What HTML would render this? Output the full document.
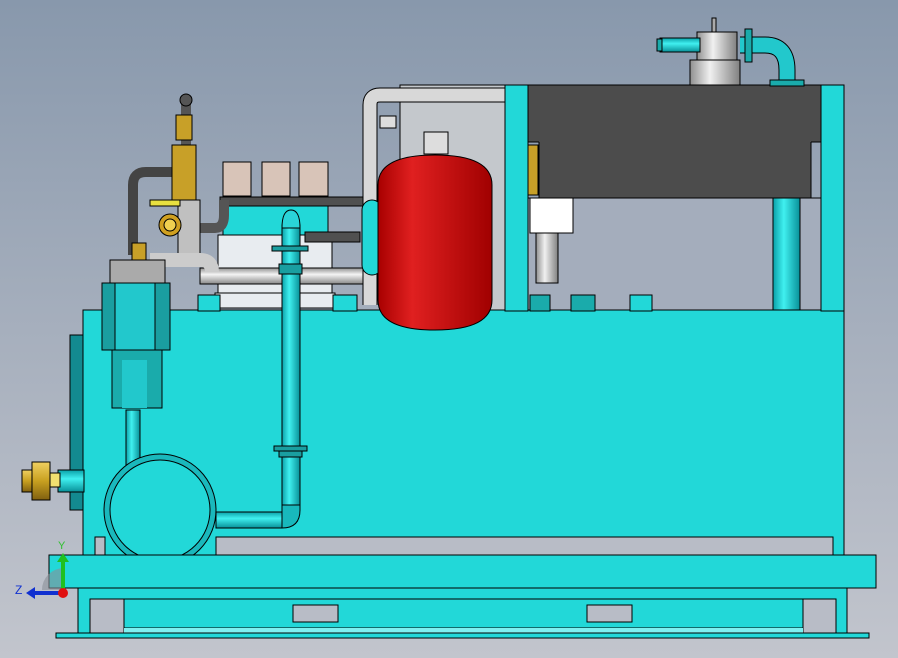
<!DOCTYPE html>
<html><head><meta charset="utf-8"><style>
html,body{margin:0;padding:0;width:898px;height:658px;overflow:hidden}
svg{display:block}
</style></head><body>
<svg width="898" height="658" viewBox="0 0 898 658" xmlns="http://www.w3.org/2000/svg">
<defs>
<linearGradient id="bg" x1="0" y1="0" x2="0" y2="1"><stop offset="0" stop-color="#8898ac"/><stop offset="0.5" stop-color="#a6afbd"/><stop offset="1" stop-color="#c2c5cd"/></linearGradient>
<linearGradient id="redh" x1="0" x2="1"><stop offset="0" stop-color="#a80000"/><stop offset="0.3" stop-color="#e02020"/><stop offset="1" stop-color="#a00000"/></linearGradient>
<linearGradient id="cyv" x1="0" x2="1"><stop offset="0" stop-color="#0aa0a8"/><stop offset="0.4" stop-color="#40f0f0"/><stop offset="1" stop-color="#089098"/></linearGradient>
<linearGradient id="cyh" x1="0" y1="0" x2="0" y2="1"><stop offset="0" stop-color="#0aa0a8"/><stop offset="0.4" stop-color="#40f0f0"/><stop offset="1" stop-color="#089098"/></linearGradient>
<linearGradient id="gv" x1="0" x2="1"><stop offset="0" stop-color="#909090"/><stop offset="0.4" stop-color="#f0f0f0"/><stop offset="1" stop-color="#808080"/></linearGradient>
<linearGradient id="gh" x1="0" y1="0" x2="0" y2="1"><stop offset="0" stop-color="#909090"/><stop offset="0.4" stop-color="#f4f4f4"/><stop offset="1" stop-color="#888"/></linearGradient>
<linearGradient id="dv" x1="0" x2="1"><stop offset="0" stop-color="#333"/><stop offset="0.4" stop-color="#777"/><stop offset="1" stop-color="#333"/></linearGradient>
<linearGradient id="brass" x1="0" y1="0" x2="0" y2="1"><stop offset="0" stop-color="#f0d060"/><stop offset="0.5" stop-color="#c8a020"/><stop offset="1" stop-color="#806010"/></linearGradient>
</defs>
<rect width="898" height="658" fill="url(#bg)"/>
<g stroke="#000" stroke-width="1">
<rect x="400" y="85" width="105" height="225" fill="#c4c8cc"/>
<rect x="223" y="162" width="28" height="34" fill="#d8c4b8"/>
<rect x="262" y="162" width="28" height="34" fill="#d8c4b8"/>
<rect x="299" y="162" width="29" height="34" fill="#d8c4b8"/>
<rect x="223" y="205" width="105" height="30" fill="#22d8d8"/>
<rect x="218" y="235" width="114" height="58" fill="#e8ecf0"/>
<rect x="215" y="293" width="120" height="15" fill="#e8ecf0"/>
<rect x="220" y="197" width="150" height="9" fill="#505050"/>
<rect x="305" y="232" width="55" height="10" fill="#505050"/>
<path d="M133 255 V185 Q133 172 146 172 H190" fill="none" stroke="#444" stroke-width="10"/>
<path d="M186 178 V100" fill="none" stroke="#555" stroke-width="10"/>
<circle cx="186" cy="100" r="6" fill="#555"/>
<rect x="172" y="145" width="24" height="55" fill="#c8a028"/>
<rect x="176" y="115" width="16" height="25" fill="#c8a028"/>
<path d="M170 228 H215 Q224 228 224 215 V200" fill="none" stroke="#555" stroke-width="10"/>
<rect x="178" y="200" width="22" height="62" fill="#c0c0c0"/>
<circle cx="170" cy="225" r="11" fill="#d0a020"/>
<circle cx="170" cy="225" r="6" fill="#f0d050"/>
<rect x="150" y="200" width="30" height="6" fill="#e8e040"/>
<rect x="200" y="268" width="180" height="16" fill="url(#gh)"/>
<path d="M150 260 H200 Q212 260 212 272" fill="none" stroke="#ccc" stroke-width="14"/>
<rect x="132" y="243" width="14" height="28" fill="#c8a028"/>
<path d="M370 305 V105 Q370 95 380 95 H505" fill="none" stroke="#000" stroke-width="15"/>
<path d="M370 305 V105 Q370 95 380 95 H505" fill="none" stroke="#d8d8d8" stroke-width="13"/>
<rect x="380" y="116" width="16" height="12" fill="#ddd"/>
<rect x="362" y="200" width="20" height="75" rx="10" fill="#22d8d8"/>
<rect x="83" y="310" width="761" height="245" fill="#22d8d8"/>
<rect x="216" y="537" width="617" height="18" fill="#b8bcc6"/>
<rect x="95" y="537" width="10" height="18" fill="#b8bcc6"/>
<rect x="505" y="85" width="23" height="226" fill="#22d8d8"/>
<rect x="821" y="85" width="23" height="226" fill="#22d8d8"/>
<rect x="528" y="198" width="293" height="112" fill="#a4adbc"/>
<rect x="530" y="198" width="43" height="35" fill="#fff"/>
<rect x="528" y="145" width="10" height="50" fill="#c8a028"/>
<rect x="536" y="233" width="22" height="50" fill="url(#gv)"/>
<rect x="773" y="198" width="27" height="112" fill="url(#cyv)"/>
<rect x="528" y="85" width="293" height="57" fill="#4c4c4c"/>
<rect x="539" y="141" width="272" height="57" fill="#4c4c4c" stroke="none"/>
<path d="M539 142 V198 H811 V142" fill="none"/>
<rect x="530" y="295" width="20" height="16" fill="#1aabab"/>
<rect x="571" y="295" width="24" height="16" fill="#1aabab"/>
<rect x="630" y="295" width="22" height="16" fill="#22d8d8"/>
<rect x="198" y="295" width="22" height="16" fill="#22d8d8"/>
<rect x="333" y="295" width="24" height="16" fill="#22d8d8"/>
<rect x="690" y="60" width="50" height="25" fill="url(#gv)"/>
<rect x="697" y="32" width="40" height="28" fill="url(#gv)"/>
<rect x="712" y="18" width="4" height="14" fill="#aaa"/>
<rect x="660" y="38" width="40" height="14" fill="url(#cyh)"/>
<rect x="657" y="39" width="5" height="12" fill="#1aabab"/>
<path d="M740 45 H765 Q787 45 787 70 V80" fill="none" stroke="#000" stroke-width="17"/>
<path d="M740 45 H765 Q787 45 787 70 V80" fill="none" stroke="#22c8cc" stroke-width="15"/>
<rect x="745" y="29" width="7" height="33" fill="#1aabab"/>
<rect x="770" y="80" width="34" height="6" fill="#1aabab"/>
<rect x="424" y="132" width="24" height="22" fill="#ddd"/>
<path d="M378 185 Q378 155 435 155 Q492 155 492 185 V300 Q492 330 435 330 Q378 330 378 300 Z" fill="url(#redh)"/>
<rect x="102" y="283" width="68" height="67" fill="#1a9ea0"/>
<rect x="115" y="283" width="40" height="67" fill="#22c8cc"/>
<rect x="112" y="350" width="50" height="58" fill="#1aabab"/>
<rect x="122" y="360" width="25" height="48" fill="#22c8cc" stroke="none"/>
<rect x="110" y="260" width="55" height="23" fill="#aaa"/>
<rect x="126" y="410" width="14" height="60" fill="url(#cyv)"/>
<rect x="70" y="335" width="13" height="175" fill="#138a90"/>
<rect x="58" y="470" width="26" height="22" fill="url(#cyh)"/>
<rect x="32" y="462" width="18" height="38" fill="url(#brass)"/>
<rect x="22" y="470" width="10" height="22" fill="url(#brass)"/>
<rect x="50" y="473" width="10" height="14" fill="#f0e070"/>
<!-- cyan vertical pipe -->
<rect x="282" y="225" width="18" height="285" fill="url(#cyv)"/>
<path d="M282 228 Q282 210 291 210 Q300 210 300 228 Z" fill="#2ad4d8"/>
<path d="M282 510 V505 H300 V510 Q300 528 282 528 V512 Z" fill="#18b8bc"/>
<rect x="216" y="512" width="66" height="16" fill="url(#cyh)"/>
<rect x="274" y="446" width="33" height="5" fill="#1a9ea0"/>
<rect x="279" y="451" width="23" height="6" fill="#1a9ea0"/>
<rect x="272" y="246" width="36" height="5" fill="#1a9ea0"/>
<rect x="279" y="264" width="23" height="10" fill="#1a9ea0"/>
<circle cx="160" cy="510" r="56" fill="#1ab8bc"/>
<circle cx="160" cy="510" r="50" fill="#22d8d8"/>
<rect x="49" y="555" width="827" height="33" fill="#22d8d8"/>
<rect x="78" y="588" width="769" height="46" fill="#22d8d8"/>
<rect x="90" y="599" width="745" height="29" fill="#22d8d8"/>
<rect x="90" y="599" width="34" height="34" fill="#b8bcc6"/>
<rect x="803" y="599" width="33" height="34" fill="#b8bcc6"/>
<rect x="293" y="605" width="45" height="17" fill="#b8bcc6"/>
<rect x="587" y="605" width="45" height="17" fill="#b8bcc6"/>
<rect x="124" y="628" width="679" height="5" fill="#7ff0f0" stroke="none"/>
<rect x="56" y="633" width="813" height="5" fill="#22d8d8"/>
</g>
<path d="M42 590 A22 22 0 0 1 63 568 V590 Z" fill="#8a8f98" opacity="0.6"/>
<rect x="61" y="560" width="4" height="30" fill="#20c020"/>
<polygon points="57,562 63,553 69,562" fill="#20c020"/>
<rect x="33" y="591" width="30" height="4" fill="#1030d0"/>
<polygon points="35,587 26,593 35,599" fill="#1030d0"/>
<circle cx="63" cy="593" r="5" fill="#e01010"/>
<text x="58" y="549" font-family="Liberation Sans, sans-serif" font-size="11" fill="#30c030">Y</text>
<text x="15" y="594" font-family="Liberation Sans, sans-serif" font-size="12" fill="#1030d0">Z</text>
</svg>
</body></html>
